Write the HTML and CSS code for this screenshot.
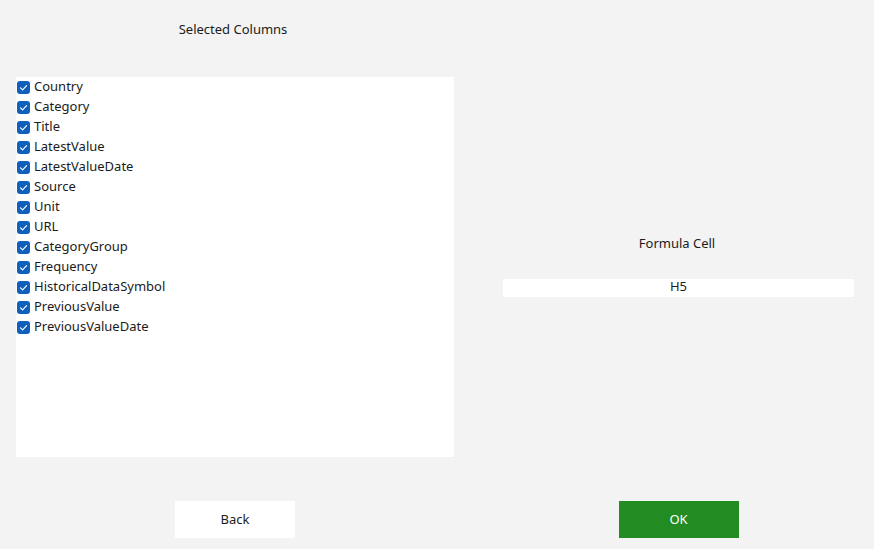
FILE: index.html
```html
<!DOCTYPE html>
<html>
<head>
<meta charset="utf-8">
<link rel="stylesheet" href="styles.css">
</head>
<body>
<div class="page">
  <div class="col-left-head"><span class="caption">Selected Columns</span></div>
  <div class="list">
    <label class="item"><span class="box"><svg viewBox="0 0 13 13"><path d="M3.5 6.9 L5.6 8.9 L9.6 4.6" /></svg></span>Country</label>
    <label class="item"><span class="box"><svg viewBox="0 0 13 13"><path d="M3.5 6.9 L5.6 8.9 L9.6 4.6" /></svg></span>Category</label>
    <label class="item"><span class="box"><svg viewBox="0 0 13 13"><path d="M3.5 6.9 L5.6 8.9 L9.6 4.6" /></svg></span>Title</label>
    <label class="item"><span class="box"><svg viewBox="0 0 13 13"><path d="M3.5 6.9 L5.6 8.9 L9.6 4.6" /></svg></span>LatestValue</label>
    <label class="item"><span class="box"><svg viewBox="0 0 13 13"><path d="M3.5 6.9 L5.6 8.9 L9.6 4.6" /></svg></span>LatestValueDate</label>
    <label class="item"><span class="box"><svg viewBox="0 0 13 13"><path d="M3.5 6.9 L5.6 8.9 L9.6 4.6" /></svg></span>Source</label>
    <label class="item"><span class="box"><svg viewBox="0 0 13 13"><path d="M3.5 6.9 L5.6 8.9 L9.6 4.6" /></svg></span>Unit</label>
    <label class="item"><span class="box"><svg viewBox="0 0 13 13"><path d="M3.5 6.9 L5.6 8.9 L9.6 4.6" /></svg></span>URL</label>
    <label class="item"><span class="box"><svg viewBox="0 0 13 13"><path d="M3.5 6.9 L5.6 8.9 L9.6 4.6" /></svg></span>CategoryGroup</label>
    <label class="item"><span class="box"><svg viewBox="0 0 13 13"><path d="M3.5 6.9 L5.6 8.9 L9.6 4.6" /></svg></span>Frequency</label>
    <label class="item"><span class="box"><svg viewBox="0 0 13 13"><path d="M3.5 6.9 L5.6 8.9 L9.6 4.6" /></svg></span>HistoricalDataSymbol</label>
    <label class="item"><span class="box"><svg viewBox="0 0 13 13"><path d="M3.5 6.9 L5.6 8.9 L9.6 4.6" /></svg></span>PreviousValue</label>
    <label class="item"><span class="box"><svg viewBox="0 0 13 13"><path d="M3.5 6.9 L5.6 8.9 L9.6 4.6" /></svg></span>PreviousValueDate</label>
  </div>
  <div class="formula">
    <div class="caption formula-label">Formula Cell</div>
    <div class="field">H5</div>
  </div>
  <div class="foot-left"><button class="btn btn-back">Back</button></div>
  <div class="foot-right"><button class="btn btn-ok">OK</button></div>
</div>
</body>
</html>
```
FILE: styles.css
```css
html, body {
  margin: 0;
  padding: 0;
  background: #f3f3f3;
}
body {
  font-family: "Noto Sans", "Open Sans", sans-serif;
  font-size: 13px;
  color: #1b1b1b;
}
.page {
  display: grid;
  grid-template-columns: 438px 351px;
  grid-template-rows: 77px 380px 92px;
  column-gap: 49px;
  padding-left: 16px;
  width: 874px;
  height: 549px;
  box-sizing: border-box;
  grid-template-areas:
    "head ."
    "list formula"
    "fl fr";
}
.col-left-head {
  grid-area: head;
  display: flex;
  justify-content: center;
  padding-top: 19px;
  padding-right: 4px;
}
.caption {
  font-size: 13px;
  line-height: 20px;
  color: #1b1b1b;
}
.list {
  grid-area: list;
  background: #ffffff;
  padding-top: 0;
  display: flex;
  flex-direction: column;
}
.item {
  display: flex;
  align-items: center;
  height: 20px;
  box-sizing: border-box;
  padding: 0 0 2px 1px;
  font-size: 13px;
  color: #1b1b1b;
  line-height: 18px;
}
.box {
  width: 13px;
  height: 13px;
  border-radius: 3px;
  background: #0f5fbd;
  margin-right: 4px;
  display: flex;
  flex: none;
  position: relative;
  top: 1px;
}
.box svg {
  width: 13px;
  height: 13px;
  fill: none;
  stroke: #ffffff;
  stroke-width: 1.2;
  stroke-linecap: round;
  stroke-linejoin: round;
}
.formula {
  grid-area: formula;
  display: flex;
  flex-direction: column;
  align-items: center;
  padding-top: 156px;
}
.formula-label {
  margin-bottom: 26px;
  padding-right: 3px;
}
.field {
  width: 351px;
  height: 18px;
  background: #ffffff;
  text-align: center;
  line-height: 15px;
  font-size: 13px;
}
.foot-left, .foot-right {
  display: flex;
  justify-content: center;
  padding-top: 44px;
}
.foot-left { grid-area: fl; }
.foot-right { grid-area: fr; }
.btn {
  width: 120px;
  height: 37px;
  border: none;
  border-radius: 0;
  font-family: inherit;
  font-size: 13px;
  line-height: 15px;
  padding: 0 0 1px 0;
}
.btn-back {
  background: #ffffff;
  color: #1b1b1b;
}
.btn-ok {
  background: #228b22;
  color: #ffffff;
}
```
